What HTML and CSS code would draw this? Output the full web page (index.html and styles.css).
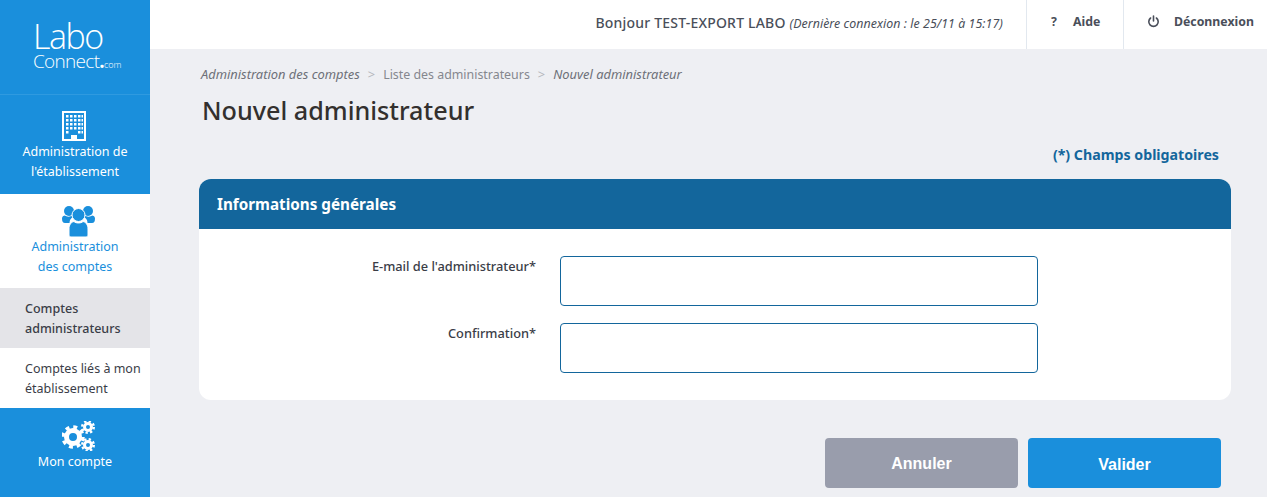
FILE: index.html

```html
<!DOCTYPE html>
<html lang="fr">
<head>
  <meta charset="UTF-8" />
  <meta name="viewport" content="width=device-width, initial-scale=1.0" />
  <title>Nouvel administrateur</title>
  <link rel="stylesheet" href="styles.css">
</head>
<body>
  <aside class="sidebar">
    <div class="logo">
      <div class="logo-labo">Labo</div>
      <div class="logo-connect">Connect<span class="logo-dot">.</span><span class="logo-com">com</span></div>
    </div>
    <a class="nav-item nav-first">
      <svg class="nav-icon" width="26" height="30" viewBox="0 0 26 30">
        <path fill="#fff" fill-rule="evenodd" d="M1 0h24v30H1zM3 2v26h7v-4h6v4h7V2z"/>
        <path fill="#fff" d="M5 4h2.500v2.500H5zM9 4h2.500v2.500H9zM13 4h2.500v2.500H13zM17 4h2.500v2.500H17zM20.500 4H22v2.500h-1.500zM5 8h2.500v2.500H5zM9 8h2.500v2.500H9zM13 8h2.500v2.500H13zM17 8h2.500v2.500H17zM20.500 8H22v2.500h-1.500zM5 12h2.500v2.500H5zM9 12h2.500v2.500H9zM13 12h2.500v2.500H13zM17 12h2.500v2.500H17zM20.500 12H22v2.500h-1.500zM5 16h2.500v2.500H5zM9 16h2.500v2.500H9zM13 16h2.500v2.500H13zM17 16h2.500v2.500H17zM20.500 16H22v2.500h-1.500zM5 20h2.500v2.500H5zM17 20h2.500v2.500H17zM20.500 20H22v2.500h-1.500z"/>
      </svg>
      <span>Administration de<br>l'établissement</span>
    </a>
    <a class="nav-item nav-active">
      <svg class="nav-icon" width="33" height="32" viewBox="0 0 33 32">
        <circle cx="7" cy="6" r="5" fill="#1a8fdc"/>
        <circle cx="26" cy="6" r="5" fill="#1a8fdc"/>
        <path fill="#1a8fdc" d="M0 13.500c0-2 1.500-3 3-3 1 1.500 6 1.500 7 0l1 1.500c-2 1-3.500 3-3.500 6H3c-2 0-3-1.500-3-4.500zM33 13.500c0-2-1.500-3-3-3-1 1.500-6 1.500-7 0l-1 1.500c2 1 3.500 3 3.500 6H30c2 0 3-1.500 3-4.500z"/>
        <circle cx="16.500" cy="10" r="6.500" fill="#1a8fdc" stroke="#fff"/>
        <path fill="#1a8fdc" stroke="#fff" d="M9 32c-1 0-2-1-2-2v-6c0-4 2-7 5-7.500 2 2 7 2 9 0 3 .5 5 3.500 5 7.500v6c0 1-1 2-2 2z"/>
      </svg>
      <span>Administration<br>des comptes</span>
    </a>
    <a class="sub-item sub-active">Comptes administrateurs</a>
    <a class="sub-item">Comptes liés à mon établissement</a>
    <a class="nav-item nav-last">
      <svg class="nav-icon" width="33" height="30" viewBox="0 0 33 30">
        <g fill="none" stroke="#fff">
          <circle cx="11" cy="16" r="6.500" stroke-width="5"/>
          <circle cx="11" cy="16" r="10" stroke-width="3.500" stroke-dasharray="3.900 3.950"/>
          <circle cx="26" cy="6" r="3.500" stroke-width="3"/>
          <circle cx="26" cy="6" r="5.800" stroke-width="2.400" stroke-dasharray="2.300 2.250"/>
          <circle cx="26" cy="24" r="3.500" stroke-width="3"/>
          <circle cx="26" cy="24" r="5.800" stroke-width="2.400" stroke-dasharray="2.300 2.250"/>
        </g>
      </svg>
      <span>Mon compte</span>
    </a>
  </aside>

  <div class="page">
    <header class="topbar">
      <div class="greeting">Bonjour TEST-EXPORT LABO <em>(Dernière connexion : le 25/11 à 15:17)</em></div>
      <a class="top-link top-help"><span class="top-icon">?</span>Aide</a>
      <a class="top-link top-logout">
        <svg class="top-icon" width="13" height="13" viewBox="0 0 13 13">
          <path fill="none" stroke="#4a4f5a" stroke-width="1.600" stroke-linecap="round" d="M6.500 1v5M3.600 3a4.700 4.700 0 1 0 5.800 0"/>
        </svg>Déconnexion
      </a>
    </header>

    <main class="content">
      <div class="breadcrumb">
        <em>Administration des comptes</em><span class="sep">&gt;</span><span class="crumb">Liste des administrateurs</span><span class="sep">&gt;</span><em>Nouvel administrateur</em>
      </div>
      <h1>Nouvel administrateur</h1>
      <div class="required">(*) Champs obligatoires</div>

      <section class="card">
        <h2>Informations générales</h2>
        <form class="card-body">
          <div class="row">
            <label for="email">E-mail de l'administrateur*</label>
            <input type="text" id="email" />
          </div>
          <div class="row">
            <label for="confirm">Confirmation*</label>
            <input type="text" id="confirm" />
          </div>
        </form>
      </section>

      <div class="actions">
        <button type="button" class="btn btn-cancel">Annuler</button>
        <button type="button" class="btn btn-ok">Valider</button>
      </div>
    </main>
  </div>
</body>
</html>
```

FILE: styles.css

```css
:root {
  --blue: #1a8fdc;
  --dark-blue: #13669c;
  --bg-color: #eeeff3;
  --text-color: #3a3d47;
}
* {
  box-sizing: border-box;
}
html, body {
  height: 100%;
}
body {
  margin: 0;
  display: flex;
  overflow: hidden;
  font-family: "Noto Sans", Arial, sans-serif;
  font-size: 12.5px;
  background-color: var(--bg-color);
  color: var(--text-color);
}

/* sidebar */
.sidebar {
  width: 150px;
  flex: none;
  display: flex;
  flex-direction: column;
  background: var(--blue);
  color: white;
}
.logo {
  height: 95px;
  padding: 19px 0 0 33px;
  border-bottom: 1px solid #2f9ae0;
  font-family: "Open Sans", sans-serif;
  font-weight: 300;
}
.logo-labo {
  font-size: 34px;
  line-height: 35px;
  letter-spacing: -1.5px;
}
.logo-connect {
  font-size: 19px;
  line-height: 15px;
  letter-spacing: -0.7px;
}
.logo-dot {
  font-weight: 700;
}
.logo-com {
  font-size: 9px;
  letter-spacing: 0;
}
.nav-item {
  display: flex;
  flex-direction: column;
  align-items: center;
  text-align: center;
  line-height: 20px;
}
.nav-first {
  height: 99px;
  padding-top: 16px;
}
.nav-active {
  height: 94px;
  padding-top: 11px;
  background: white;
  color: var(--blue);
}
.nav-last {
  flex: 1;
  padding-top: 13px;
}
.nav-icon {
  display: block;
  margin-bottom: 1px;
}
.nav-first .nav-icon {
  margin-right: 2px;
}
.nav-active .nav-icon {
  margin-bottom: 0;
  margin-left: 6px;
}
.nav-last .nav-icon {
  margin-left: 6px;
}
.sub-item {
  height: 60px;
  padding: 11px 5px 0 25px;
  line-height: 20px;
  background: white;
  color: var(--text-color);
}
.sub-active {
  background: #e4e4e8;
  font-weight: 500;
}

/* top bar */
.page {
  flex: 1;
  min-width: 0;
}
.topbar {
  height: 49px;
  display: flex;
  align-items: center;
  background: white;
  color: #4a4f5a;
}
.greeting {
  flex: 1;
  text-align: right;
  padding: 0 23px 5px 0;
  font-size: 14px;
  letter-spacing: 0.2px;
  font-weight: 500;
}
.greeting em {
  font-size: 12.400px;
  letter-spacing: 0.05px;
  font-weight: 400;
}
.top-link {
  height: 100%;
  display: flex;
  align-items: center;
  padding-bottom: 6px;
  border-left: 1px solid #e2e8ef;
  font-size: 12.300px;
  font-weight: 700;
}
.top-help {
  width: 97px;
  padding-left: 24px;
}
.top-help .top-icon {
  margin-right: 9px;
}
.top-logout {
  width: 144px;
  padding-left: 23px;
}
.top-icon {
  width: 13px;
  margin-right: 14px;
}

/* content */
.content {
  padding: 0 36px 0 49px;
}
.breadcrumb {
  padding: 17px 0 0 2px;
  line-height: 17px;
  font-size: 12.900px;
  color: #6d7078;
}
.sep {
  margin: 0 8px;
  color: #b5b7bd;
}
.crumb {
  font-size: 12.400px;
  color: #85878e;
}
h1 {
  margin: 9px 0 0 3px;
  font-size: 25.200px;
  line-height: 36px;
  font-weight: 500;
  color: #33302e;
}
.required {
  margin: 17px 12px 0 0;
  text-align: right;
  line-height: 20px;
  font-weight: 700;
  font-size: 14.200px;
  color: var(--dark-blue);
}
.card {
  margin-top: 14px;
  border-radius: 12px;
  overflow: hidden;
  background: white;
}
h2 {
  height: 50px;
  margin: 0;
  padding-left: 18px;
  font-size: 15.250px;
  line-height: 50px;
  font-weight: 700;
  background: var(--dark-blue);
  color: white;
}
.card-body {
  height: 171px;
  padding-top: 27px;
}
.row {
  display: flex;
  margin-bottom: 17px;
}
.row label {
  width: 337px;
  margin-right: 24px;
  padding-top: 1px;
  text-align: right;
  line-height: 18px;
  font-size: 12.800px;
  font-weight: 500;
}
.row input {
  width: 478px;
  height: 50px;
  border: 1px solid var(--dark-blue);
  border-radius: 4px;
  background: white;
}
.actions {
  display: flex;
  justify-content: flex-end;
  gap: 10px;
  margin: 38px -26px 0 0;
  padding-right: 36px;
}
.btn {
  width: 193px;
  height: 50px;
  border: none;
  border-radius: 4px;
  color: white;
  font-family: "Liberation Sans", Arial, sans-serif;
  font-size: 16px;
  font-weight: 700;
}
.btn-cancel {
  padding-top: 2px;
  background: #999dac;
}
.btn-ok {
  padding-top: 5px;
  background: var(--blue);
}
```
